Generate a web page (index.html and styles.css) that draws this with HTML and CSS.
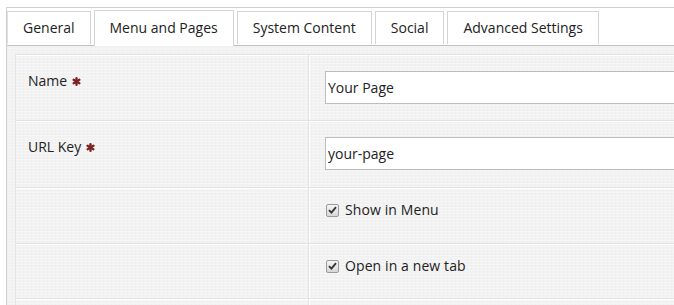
FILE: index.html
```html
<!DOCTYPE html>
<html lang="en">
<head>
  <meta charset="UTF-8" />
  <title>Page Settings</title>
  <link rel="stylesheet" href="styles.css">
</head>
<body>
  <div class="editor">
    <ul class="tabs">
      <li class="tab">General</li>
      <li class="tab active">Menu and Pages</li>
      <li class="tab">System Content</li>
      <li class="tab">Social</li>
      <li class="tab">Advanced Settings</li>
    </ul>

    <div class="panel">
      <div class="grid">
        <div class="row">
          <div class="label">Name <span class="req"><svg width="9" height="9" viewBox="0 0 10 10"><g stroke="#7b2323" stroke-width="2.6" stroke-linecap="round"><path d="M5 1.3 V8.7"/><path d="M1.8 3.1 L8.2 6.9"/><path d="M1.8 6.9 L8.2 3.1"/></g></svg></span></div>
          <div class="field"><input type="text" class="text-input" value="Your Page"></div>
        </div>
        <div class="row">
          <div class="label">URL Key <span class="req"><svg width="9" height="9" viewBox="0 0 10 10"><g stroke="#7b2323" stroke-width="2.6" stroke-linecap="round"><path d="M5 1.3 V8.7"/><path d="M1.8 3.1 L8.2 6.9"/><path d="M1.8 6.9 L8.2 3.1"/></g></svg></span></div>
          <div class="field"><input type="text" class="text-input" value="your-page"></div>
        </div>
        <div class="row short">
          <div class="label"></div>
          <div class="field">
            <label class="check"><span class="box"><svg width="9" height="8" viewBox="0 0 9 8"><path d="M1 4.2 L3.4 6.6 L8 1.2" fill="none" stroke="#333" stroke-width="1.8"/></svg></span>Show in Menu</label>
          </div>
        </div>
        <div class="row short">
          <div class="label"></div>
          <div class="field">
            <label class="check"><span class="box"><svg width="9" height="8" viewBox="0 0 9 8"><path d="M1 4.2 L3.4 6.6 L8 1.2" fill="none" stroke="#333" stroke-width="1.8"/></svg></span>Open in a new tab</label>
          </div>
        </div>
        <div class="row short">
          <div class="label"></div>
          <div class="field"></div>
        </div>
      </div>
    </div>
  </div>
</body>
</html>
```

FILE: styles.css
```css
html {
  overflow: hidden;
}
body {
  margin: 0;
  font-family: 'Open Sans', sans-serif;
  font-size: 14px;
  color: #222;
  background-color: #fff;
}
.editor {
  margin: 7px 0 0 6px;
  border-top: 1px solid #d0d0d0;
  border-left: 1px solid #d0d0d0;
  padding-top: 2px;
}
.tabs {
  display: flex;
  gap: 3px;
  list-style: none;
  margin: 0;
  padding: 0;
  align-items: flex-end;
  position: relative;
  z-index: 1;
}
.tab {
  height: 33px;
  line-height: 32px;
  padding: 0 15px;
  background-color: #fff;
  border: 1px solid #d4d4d4;
  border-bottom: none;
  box-sizing: border-box;
  margin-bottom: 1px;
}
.tab:first-child {
  border-left-color: #e0e0e0;
}
.active {
  height: 36px;
  line-height: 34px;
  margin-bottom: -1px;
}
.panel {
  border-top: 1px solid #c2c2c2;
  background-color: #f2f2f2;
  background-image:
    repeating-linear-gradient(0deg, rgba(255,255,255,0.3) 0 1px, transparent 1px 3px),
    repeating-linear-gradient(90deg, rgba(0,0,0,0.01) 0 1px, transparent 1px 4px);
  padding: 8px 0 0 8px;
  height: 400px;
}
.grid {
  border-left: 1px solid #e4e4e4;
  width: 760px;
}
.row {
  display: flex;
  height: 65px;
  border-top: 1px solid #e2e2e2;
  box-shadow: inset 0 1px 0 #fff;
}
.row:nth-child(2) {
  height: 66px;
}
.short {
  height: 55px;
}
.short:nth-child(4) {
  height: 54px;
}
.label {
  width: 280px;
  padding: 16px 0 0 12px;
  line-height: 20px;
  border-right: 1px solid #e2e2e2;
  box-shadow: 1px 0 0 #fff;
}
.req {
  display: inline-block;
  margin-left: 1px;
  vertical-align: 0;
}
.field {
  flex: 1;
  padding: 16px 0 0 16px;
}
.text-input {
  width: 420px;
  height: 33px;
  box-sizing: border-box;
  border: 1px solid #bdbdbd;
  padding: 0 2px;
  font-family: 'Open Sans', sans-serif;
  font-size: 14px;
  color: #222;
  background: #fff;
  outline: none;
}
.short .field {
  padding-top: 12px;
}
.check {
  display: flex;
  align-items: center;
  line-height: 20px;
  letter-spacing: 0.1px;
}
.box {
  width: 11px;
  height: 11px;
  border: 1px solid #9a9a9a;
  border-radius: 2px;
  background: linear-gradient(#f4f4f4, #d8d8d8);
  display: flex;
  align-items: center;
  justify-content: center;
  margin: 0 6px 0 1px;
}
```
